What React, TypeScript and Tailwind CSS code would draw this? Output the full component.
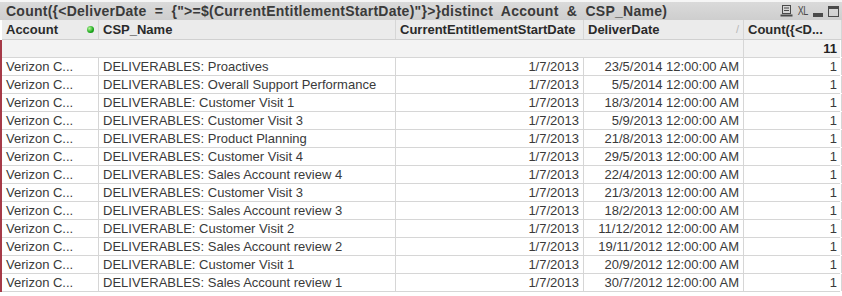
import React from 'react';

interface Row {
  account: string;
  csp: string;
  start: string;
  deliver: string;
  count: string;
}

const rows: Row[] = [
  { account: 'Verizon C...', csp: 'DELIVERABLES: Proactives', start: '1/7/2013', deliver: '23/5/2014 12:00:00 AM', count: '1' },
  { account: 'Verizon C...', csp: 'DELIVERABLES: Overall Support Performance', start: '1/7/2013', deliver: '5/5/2014 12:00:00 AM', count: '1' },
  { account: 'Verizon C...', csp: 'DELIVERABLE: Customer Visit 1', start: '1/7/2013', deliver: '18/3/2014 12:00:00 AM', count: '1' },
  { account: 'Verizon C...', csp: 'DELIVERABLES: Customer Visit 3', start: '1/7/2013', deliver: '5/9/2013 12:00:00 AM', count: '1' },
  { account: 'Verizon C...', csp: 'DELIVERABLES: Product Planning', start: '1/7/2013', deliver: '21/8/2013 12:00:00 AM', count: '1' },
  { account: 'Verizon C...', csp: 'DELIVERABLES: Customer Visit 4', start: '1/7/2013', deliver: '29/5/2013 12:00:00 AM', count: '1' },
  { account: 'Verizon C...', csp: 'DELIVERABLES: Sales Account review 4', start: '1/7/2013', deliver: '22/4/2013 12:00:00 AM', count: '1' },
  { account: 'Verizon C...', csp: 'DELIVERABLES: Customer Visit 3', start: '1/7/2013', deliver: '21/3/2013 12:00:00 AM', count: '1' },
  { account: 'Verizon C...', csp: 'DELIVERABLES: Sales Account review 3', start: '1/7/2013', deliver: '18/2/2013 12:00:00 AM', count: '1' },
  { account: 'Verizon C...', csp: 'DELIVERABLE: Customer Visit 2', start: '1/7/2013', deliver: '11/12/2012 12:00:00 AM', count: '1' },
  { account: 'Verizon C...', csp: 'DELIVERABLES: Sales Account review 2', start: '1/7/2013', deliver: '19/11/2012 12:00:00 AM', count: '1' },
  { account: 'Verizon C...', csp: 'DELIVERABLE: Customer Visit 1', start: '1/7/2013', deliver: '20/9/2012 12:00:00 AM', count: '1' },
  { account: 'Verizon C...', csp: 'DELIVERABLES: Sales Account review 1', start: '1/7/2013', deliver: '30/7/2012 12:00:00 AM', count: '1' },
];

const cols = 'grid grid-cols-[97px_297px_188px_160px_98px]';
const cell = 'border-r border-[#d6d6d6] px-[4px] whitespace-nowrap overflow-hidden';

const App: React.FC = () => {
  return (
    <div className="w-[842px] h-[296px] bg-white text-[#333] font-['Liberation_Sans',Arial,sans-serif] overflow-hidden">
      {/* Caption */}
      <div className="h-[20px] flex items-center justify-between bg-gradient-to-b from-[#dadada] to-[#cecece] border-t-2 border-t-[#f6f6f6] pl-[6px] pr-[3px]">
        <span className="text-[14px] font-bold text-[#3a3a3a] whitespace-pre tracking-[0.25px]">
          {'Count({<DeliverDate  =  {">=$(CurrentEntitlementStartDate)"}>}distinct  Account  &  CSP_Name)'}
        </span>
        <div className="flex items-center gap-[5px]">
          <svg width="13" height="12" viewBox="0 0 13 12">
            <rect x="2.5" y="0.5" width="8" height="8" fill="none" stroke="#4a4a4a" />
            <line x1="4" y1="3" x2="9" y2="3" stroke="#4a4a4a" />
            <line x1="4" y1="5.5" x2="9" y2="5.5" stroke="#4a4a4a" />
            <rect x="0.5" y="9.5" width="12" height="2" fill="#4a4a4a" />
          </svg>
          <span className="text-[12px] leading-none text-[#4a4a4a] tracking-[-0.5px] scale-x-75 -mx-[2px]">XL</span>
          <div className="w-[10px] h-[4px] bg-[#4a4a4a] mt-[7px]" />
          <div className="w-[11px] h-[11px] border border-[#4a4a4a] border-t-[3px]" />
        </div>
      </div>

      {/* Header */}
      <div className={`${cols} h-[20px] ml-[2px] bg-[#ebebeb] border-b border-[#d0d0d0] text-[13px] font-bold text-[#2a2a2a]`}>
        <div className={`${cell} flex items-center justify-between`}>
          <span>Account</span>
          <span className="w-[7px] h-[7px] rounded-full bg-[radial-gradient(circle_at_35%_35%,#b6f59b,#19a81a_60%,#0c6e10)]" />
        </div>
        <div className={`${cell} flex items-center`}>CSP_Name</div>
        <div className={`${cell} flex items-center`}>CurrentEntitlementStartDate</div>
        <div className={`${cell} flex items-center justify-between`}>
          <span>DeliverDate</span>
          <span className="text-[11px] font-normal text-[#b8b8b8]">/</span>
        </div>
        <div className={`${cell} flex items-center`}>{'Count({<D...'}</div>
      </div>

      <div className="border-l-2 border-l-[#a63a48] w-[840px]">
        {/* Totals */}
        <div className={`${cols} h-[18px] bg-[#f3f3f3] border-b border-[#d6d6d6] text-[13px] font-bold text-[#222]`}>
          <div />
          <div />
          <div />
          <div className="border-r border-[#d6d6d6]" />
          <div className={`${cell} flex items-center justify-end`}>11</div>
        </div>

        {/* Data */}
        {rows.map((r, i) => (
          <div key={i} className={`${cols} h-[18px] border-b border-[#d6d6d6] text-[13px] text-[#3a3a3a]`}>
            <div className={`${cell} flex items-center`}>{r.account}</div>
            <div className={`${cell} flex items-center`}>{r.csp}</div>
            <div className={`${cell} flex items-center justify-end`}>{r.start}</div>
            <div className={`${cell} flex items-center justify-end`}>{r.deliver}</div>
            <div className={`${cell} flex items-center justify-end`}>{r.count}</div>
          </div>
        ))}
      </div>
    </div>
  );
};

export default App;
